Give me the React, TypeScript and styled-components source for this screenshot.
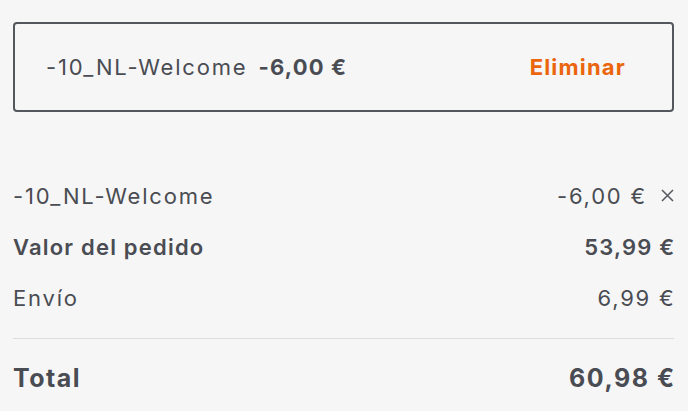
import React from "react";
import styled, { createGlobalStyle } from "styled-components";

const GlobalStyle = createGlobalStyle`
  html, body {
    margin: 0;
    padding: 0;
    background: #f6f6f6;
    font-family: Inter, "Noto Sans", sans-serif;
    color: #4a4c53;
  }
`;

const Page = styled.div`
  padding: 22px 14px 0 13px;
  display: flex;
  flex-direction: column;
`;

const CouponBox = styled.div`
  box-sizing: border-box;
  height: 90px;
  border: 2px solid #55575e;
  border-radius: 4px;
  display: flex;
  align-items: center;
  justify-content: space-between;
  padding: 0 46px 0 31px;
  margin-bottom: 58px;
`;

const CouponInfo = styled.div`
  display: flex;
  align-items: baseline;
  gap: 11px;
  font-size: 22px;
  letter-spacing: 1.8px;
`;

const CouponAmount = styled.span`
  font-weight: 700;
  letter-spacing: 1.2px;
`;

const RemoveButton = styled.button`
  border: none;
  background: none;
  padding: 0;
  font-family: inherit;
  font-size: 22px;
  font-weight: 700;
  letter-spacing: 1.2px;
  color: #ea650d;
  cursor: pointer;
`;

const Row = styled.div<{ $bold?: boolean }>`
  display: flex;
  justify-content: space-between;
  align-items: center;
  height: 51px;
  font-size: 22px;
  letter-spacing: ${(p) => (p.$bold ? "1.2px" : "1.8px")};
  font-weight: ${(p) => (p.$bold ? 600 : 400)};
`;

const Value = styled.span`
  margin-right: -1.5px;
`;

const Right = styled.span`
  display: flex;
  align-items: center;
  gap: 14px;
`;

const CloseIcon = styled.svg`
  width: 13px;
  height: 13px;
  stroke: #55575e;
  stroke-width: 1.5;
`;

const Divider = styled.hr`
  border: none;
  border-top: 1px solid #dcdcdc;
  margin: 15px 0 0;
`;

const TotalRow = styled.div`
  display: flex;
  justify-content: space-between;
  align-items: center;
  height: 78px;
  font-size: 25px;
  font-weight: 700;
  letter-spacing: 1.5px;
`;

export default function App() {
  return (
    <>
      <GlobalStyle />
      <Page>
        <CouponBox>
          <CouponInfo>
            <span>-10_NL-Welcome</span>
            <CouponAmount>-6,00 €</CouponAmount>
          </CouponInfo>
          <RemoveButton>Eliminar</RemoveButton>
        </CouponBox>
        <Row>
          <span>-10_NL-Welcome</span>
          <Right>
            -6,00 €
            <CloseIcon viewBox="0 0 13 13">
              <path d="M1 1L12 12M12 1L1 12" />
            </CloseIcon>
          </Right>
        </Row>
        <Row $bold>
          <span>Valor del pedido</span>
          <Value>53,99 €</Value>
        </Row>
        <Row>
          <span>Envío</span>
          <Value>6,99 €</Value>
        </Row>
        <Divider />
        <TotalRow>
          <span>Total</span>
          <Value>60,98 €</Value>
        </TotalRow>
      </Page>
    </>
  );
}
